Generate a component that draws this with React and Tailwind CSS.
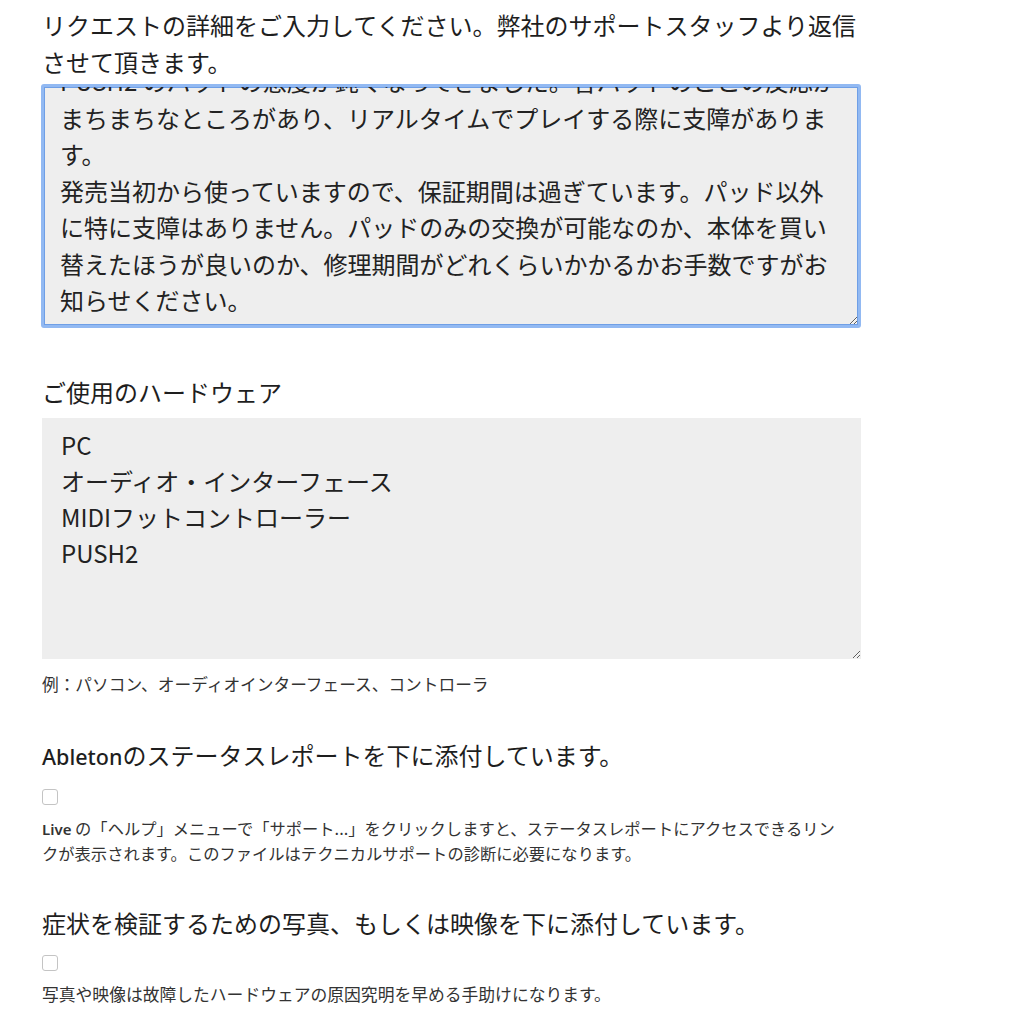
import React from "react";

const jp = { fontFamily: '"Noto Sans CJK JP", "Noto Sans", sans-serif' };

const detail =
  "PUSH2 のパッドの感度が鈍くなってきました。各パッドのここの反応が" +
  "まちまちなところがあり、リアルタイムでプレイする際に支障がありま" +
  "す。\n" +
  "発売当初から使っていますので、保証期間は過ぎています。パッド以外" +
  "に特に支障はありません。パッドのみの交換が可能なのか、本体を買い" +
  "替えたほうが良いのか、修理期間がどれくらいかかるかお手数ですがお" +
  "知らせください。";

const hardware = "PC\nオーディオ・インターフェース\nMIDIフットコントローラー\nPUSH2";

export default function App() {
  return (
    <div className="min-h-[1011px] bg-white text-[#222]" style={jp}>
      <div className="w-[819px] ml-[42px] pt-[6px] flex flex-col">
        <p className="text-[24px] leading-[37px] text-[#1e1e1e]">
          リクエストの詳細をご入力してください。弊社のサポートスタッフより返信させて頂きます。
        </p>
        <textarea
          ref={(el) => {
            if (el) el.scrollTop = 36;
          }}
          defaultValue={detail}
          readOnly
          className="mt-[4px] h-[244px] w-[820px] -ml-[1px] border-[3px] border-[#92b9f2] rounded-[3px] bg-[#eeeeee] pl-[16px] pr-[14px] pt-[12px] pb-[20px] text-[24px] leading-[36.5px] text-[#222] outline-none shadow-[inset_0_0_0_1px_#6f9fe6] overflow-hidden"
          style={jp}
        />
        <p className="mt-[46px] text-[24px] leading-[36px] text-[#1e1e1e]">ご使用のハードウェア</p>
        <textarea
          defaultValue={hardware}
          readOnly
          className="mt-[8px] h-[241px] w-[819px] bg-[#eeeeee] px-[19px] pt-[9px] text-[24px] leading-[36px] text-[#222] outline-none overflow-hidden"
          style={jp}
        />
        <p className="mt-[13px] text-[16.7px] leading-[24px] text-[#333]">
          例：パソコン、オーディオインターフェース、コントローラ
        </p>
        <p className="mt-[41px] text-[24px] leading-[36px] text-[#1e1e1e]">
          <span className="font-medium text-[21.5px]" style={{ fontFamily: '"Noto Sans", sans-serif' }}>Ableton</span>
          のステータスレポートを下に添付しています。
        </p>
        <input
          type="checkbox"
          className="mt-[14px] appearance-none w-[16px] h-[16px] rounded-[3px] border border-[#c4c4c4] bg-white"
        />
        <p className="mt-[11px] text-[16.3px] leading-[24px] text-[#333] whitespace-nowrap">
          <span className="font-semibold text-[15px]" style={{ fontFamily: '"Noto Sans", sans-serif' }}>Live</span>
          {" "}の「ヘルプ」メニューで「サポート...」をクリックしますと、ステータスレポートにアクセスできるリン
          <br />
          クが表示されます。このファイルはテクニカルサポートの診断に必要になります。
        </p>
        <p className="mt-[40px] text-[24px] leading-[36px] text-[#1e1e1e]">
          症状を検証するための写真、もしくは映像を下に添付しています。
        </p>
        <input
          type="checkbox"
          className="mt-[14px] appearance-none w-[16px] h-[16px] rounded-[3px] border border-[#c4c4c4] bg-white"
        />
        <p className="mt-[11px] text-[16.8px] leading-[24px] text-[#333]">
          写真や映像は故障したハードウェアの原因究明を早める手助けになります。
        </p>
      </div>
    </div>
  );
}
